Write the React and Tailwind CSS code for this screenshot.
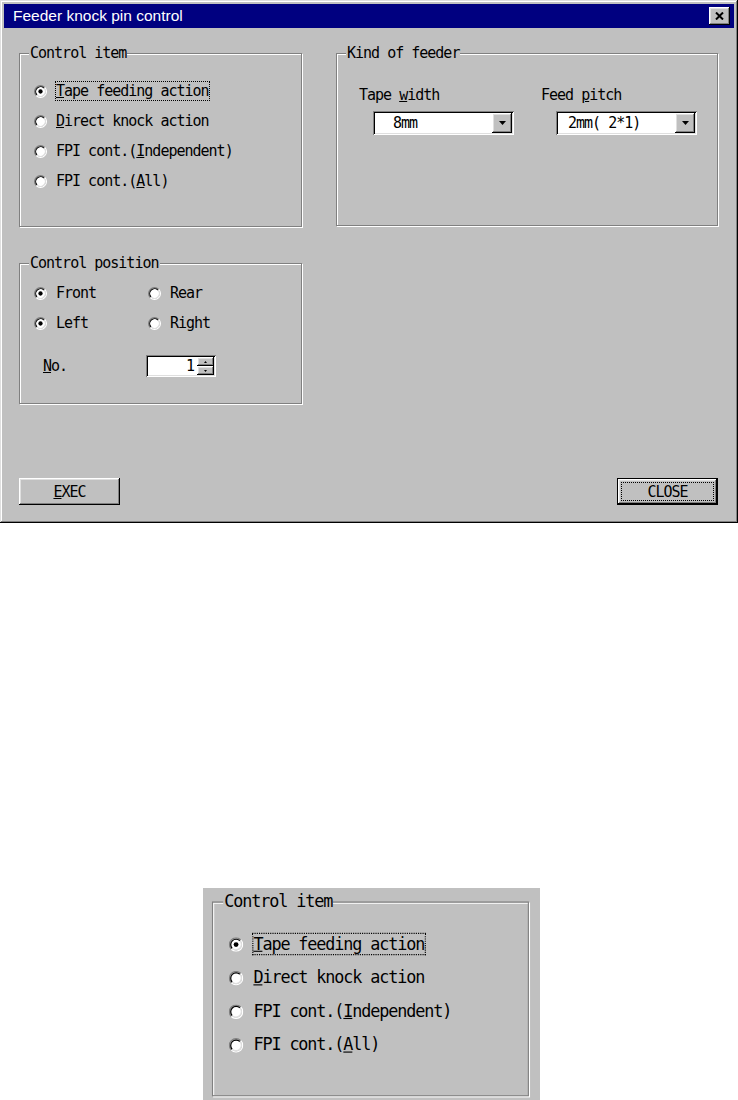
import React from 'react';

const MONO = "font-['DejaVu_Sans_Mono','Liberation_Mono',monospace] text-[15px] tracking-[-1px] text-black";
const RAISED = 'bg-[#c0c0c0] shadow-[inset_-1px_-1px_0_#000,inset_1px_1px_0_#fff,inset_-2px_-2px_0_#808080,inset_2px_2px_0_#dfdfdf]';
const SUNKEN = 'bg-white shadow-[inset_1px_1px_0_#808080,inset_-1px_-1px_0_#fff,inset_2px_2px_0_#000,inset_-2px_-2px_0_#dfdfdf]';

const Radio = ({ checked }) => (
  <svg width="13" height="13" viewBox="0 0 12 12" className="-ml-[1px] shrink-0">
    <circle cx="6" cy="6" r="4.5" fill="#fff" />
    <path d="M2.11 9.89A5.5 5.5 0 0 1 9.89 2.11" fill="none" stroke="#808080" />
    <path d="M9.89 2.11A5.5 5.5 0 0 1 2.11 9.89" fill="none" stroke="#fff" />
    <path d="M2.82 9.18A4.5 4.5 0 0 1 9.18 2.82" fill="none" stroke="#000" />
    <path d="M9.18 2.82A4.5 4.5 0 0 1 2.82 9.18" fill="none" stroke="#dfdfdf" />
    {checked && <circle cx="6" cy="6" r="2" fill="#000" />}
  </svg>
);

const Option = ({ checked, focused, children }) => (
  <div className="flex h-[30px] items-center">
    <Radio checked={checked} />
    <span
      className={`ml-[8px] border leading-[18px] ${focused ? 'border-dotted border-black' : 'border-transparent'}`}
    >
      {children}
    </span>
  </div>
);

const Group = ({ title, className, children }) => (
  <div className={`relative border border-[#808080] shadow-[1px_1px_0_#fff,inset_1px_1px_0_#fff] ${className}`}>
    <span className="absolute left-[9px] top-[-10px] bg-[#c0c0c0] px-[1px] leading-[18px]">{title}</span>
    {children}
  </div>
);

const DownArrow = () => (
  <svg width="7" height="4" viewBox="0 0 7 4">
    <path d="M0 0h7L3.5 4z" fill="#000" />
  </svg>
);

const Combo = ({ value, className }) => (
  <div className={`flex h-[24px] w-[141px] p-[2px] ${SUNKEN} ${className}`}>
    <span className={`flex-1 self-center leading-[18px] ${value.pad}`}>{value.text}</span>
    <div className={`flex w-[20px] items-center justify-center ${RAISED}`}>
      <DownArrow />
    </div>
  </div>
);

const Spin = () => (
  <div className={`flex h-[22px] w-[70px] p-[2px] ${SUNKEN}`}>
    <span className="flex-1 self-center pr-[3px] text-right leading-[18px]">1</span>
    <div className="flex w-[17px] flex-col">
      <div className={`flex flex-1 items-center justify-center ${RAISED}`}>
        <svg width="3" height="2" viewBox="0 0 3 2"><path d="M1.5 0L3 2H0z" fill="#000" /></svg>
      </div>
      <div className={`flex flex-1 items-center justify-center ${RAISED}`}>
        <svg width="3" height="2" viewBox="0 0 3 2"><path d="M0 0h3L1.5 2z" fill="#000" /></svg>
      </div>
    </div>
  </div>
);

const ControlItem = () => (
  <Group title="Control item" className="h-[174px] w-[283px] pl-[15px] pt-[22px]">
    <Option checked focused>
      <u>T</u>ape feeding action
    </Option>
    <Option>
      <u>D</u>irect knock action
    </Option>
    <Option>
      FPI cont.(<u>I</u>ndependent)
    </Option>
    <Option>
      FPI cont.(<u>A</u>ll)
    </Option>
  </Group>
);

const Button = ({ children, isDefault }) =>
  isDefault ? (
    <div className="flex h-[27px] w-[101px] border border-black">
      <div className={`flex flex-1 p-[3px] ${RAISED}`}>
        <div className="flex flex-1 items-center justify-center border border-dotted border-black leading-[18px]">
          {children}
        </div>
      </div>
    </div>
  ) : (
    <div className={`flex h-[27px] w-[101px] items-center justify-center leading-[18px] ${RAISED}`}>{children}</div>
  );

export default function App() {
  return (
    <div className={`bg-white ${MONO}`}>
      <div className="flex h-[523px] w-[738px] flex-col bg-[#c0c0c0] p-[4px] shadow-[inset_-1px_-1px_0_#000,inset_1px_1px_0_#dfdfdf,inset_-2px_-2px_0_#808080,inset_2px_2px_0_#fff]">
        <div className="flex h-[24px] items-center justify-between bg-[#000080] pl-[9px] pr-[4px]">
          <span className="font-['Liberation_Sans',Arial,sans-serif] text-[15.5px] tracking-normal text-white">
            Feeder knock pin control
          </span>
          <div className={`flex h-[18px] w-[21px] items-center justify-center ${RAISED}`}>
            <svg width="9" height="8" viewBox="0 0 9 8">
              <path d="M1 0.5l7 7M8 0.5l-7 7" stroke="#000" strokeWidth="2" />
            </svg>
          </div>
        </div>

        <div className="flex flex-1 flex-col pb-[14px] pl-[15px] pr-[16px] pt-[25px]">
          <div className="flex gap-[34px]">
            <ControlItem />
            <Group title="Kind of feeder" className="flex h-[173px] w-[382px] pl-[22px] pt-[32px]">
              <div className="w-[182px]">
                <div className="leading-[18px]">
                  Tape <u>w</u>idth
                </div>
                <Combo className="ml-[14px] mt-[7px]" value={{ text: '8mm', pad: 'pl-[18px]' }} />
              </div>
              <div>
                <div className="leading-[18px]">
                  Feed <u>p</u>itch
                </div>
                <Combo className="ml-[15px] mt-[7px]" value={{ text: '2mm( 2*1)', pad: 'pl-[10px]' }} />
              </div>
            </Group>
          </div>

          <Group title="Control position" className="mt-[36px] h-[141px] w-[283px] pl-[15px] pt-[14px]">
            <div className="grid grid-cols-[114px_auto]">
              <Option checked>Front</Option>
              <Option>Rear</Option>
              <Option checked>Left</Option>
              <Option>Right</Option>
            </div>
            <div className="mt-[17px] grid grid-cols-[111px_auto] items-center">
              <span className="pl-[8px] leading-[18px]">
                <u>N</u>o.
              </span>
              <Spin />
            </div>
          </Group>

          <div className="mt-auto flex items-end justify-between">
            <Button>
              <u>E</u>XEC
            </Button>
            <Button isDefault>CLOSE</Button>
          </div>
        </div>
      </div>

      <div className="ml-[203px] mt-[365px] h-[212px] w-[337px] overflow-hidden bg-[#c0c0c0]">
        <div className="origin-top-left scale-[1.12] pl-[8px] pt-[12px]">
          <ControlItem />
        </div>
      </div>
    </div>
  );
}
